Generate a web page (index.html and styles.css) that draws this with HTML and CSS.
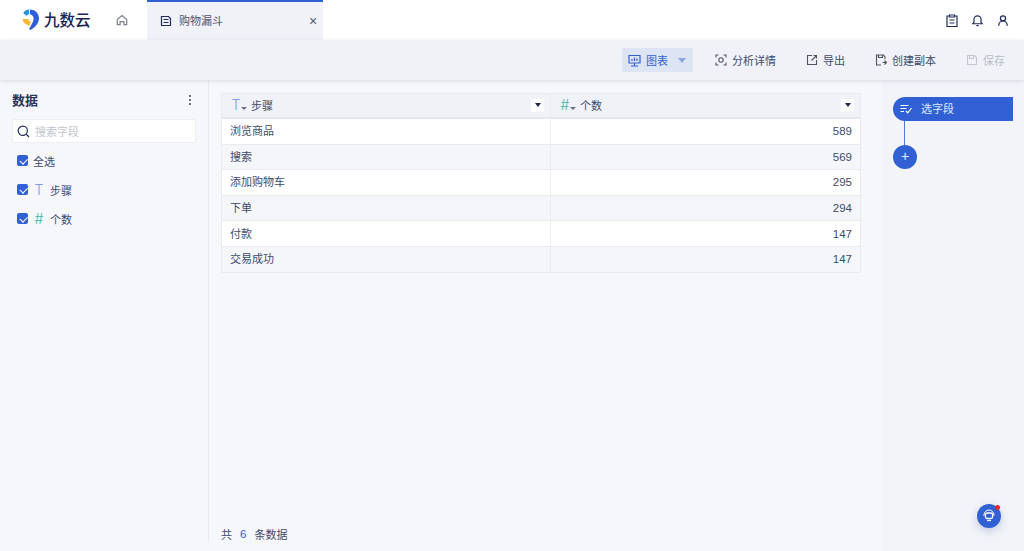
FILE: index.html
```html
<!DOCTYPE html>
<html lang="zh-CN">

<head>
    <meta charset="UTF-8">
    <meta name="viewport" content="width=device-width, initial-scale=1.0">
    <title>九数云</title>
    <link rel="stylesheet" href="styles.css">
</head>

<body>
    <header class="topbar">
        <div class="logo">
            <svg width="18" height="22" viewBox="0 0 18 22">
                <path d="M8 .5c5.500 0 9 4 9 9 0 4.500-4 9-8.500 11.500L7 20c2-3.500 5-8 4.500-11-.3-2-1.700-3.500-3.500-3.700z" fill="#2f5fd8"/>
                <path d="M7 .6v4.700c-1.200.2-2 .7-2.500 1.700L1.200 4C2.500 2 4.500.8 7 .6z" fill="#2f8fe6"/>
                <path d="M.6 10h5.600c.4 1.500 1.500 2.500 2.800 3l-1.500 3.800C3.500 15.500.8 13.500.6 10z" fill="#f6b73c"/>
            </svg>
            <span class="logo-text">九数云</span>
        </div>
        <button class="home-btn">
            <svg width="12" height="12" viewBox="0 0 14 14" fill="none" stroke="#7d828c" stroke-width="1.400">
                <path d="M1.500 6.500 7 1.800l5.500 4.700v6h-3.300V8.800H4.800v3.700H1.500z"/>
            </svg>
        </button>
        <div class="tab">
            <svg width="12" height="12" viewBox="0 0 12 12" fill="none" stroke="#1f2d5a" stroke-width="1.200">
                <path d="M1.500 1.500h7l2 2v7h-9zM3.500 4.500h5M3.500 7.500h5"/>
            </svg>
            <span class="tab-title">购物漏斗</span>
            <span class="tab-close">×</span>
        </div>
        <div class="top-actions">
            <svg width="12" height="13" viewBox="0 0 12 13" fill="none" stroke="#1f2d5a" stroke-width="1.200">
                <path d="M3.500 2H1v10.500h10V2H8.500M3.500 1h5v2h-5zM3.500 6h5M3.500 9h5"/>
            </svg>
            <svg width="13" height="13" viewBox="0 0 14 14" fill="none" stroke="#1f2d5a" stroke-width="1.300">
                <path d="M2 10.500h10L10.800 9V5.800a3.800 3.800 0 0 0-7.600 0V9zM5.800 12.500h2.400"/>
            </svg>
            <svg width="12" height="13" viewBox="0 0 14 14" fill="none" stroke="#1f2d5a" stroke-width="1.500">
                <circle cx="7" cy="4.500" r="3"/>
                <path d="M2 13c0-3 2-5.500 5-5.500s5 2.500 5 5.500"/>
            </svg>
        </div>
    </header>

    <div class="toolbar">
        <button class="tool tool-active">
            <svg width="13" height="13" viewBox="0 0 13 13" fill="none" stroke="#3160d5" stroke-width="1.200">
                <path d="M1 1.500h11v7.500H1zM6.500 9v2.500M3 12h7"/>
                <path d="M4 7V5M6.500 7V3.500M9 7V4.500"/>
            </svg>
            <span>图表</span>
            <i class="caret caret-blue"></i>
        </button>
        <button class="tool">
            <svg width="12" height="12" viewBox="0 0 12 12" fill="none" stroke="#50555f" stroke-width="1.100">
                <path d="M1 3.500V1h2.500M8.500 1H11v2.500M11 8.500V11H8.500M3.500 11H1V8.500"/>
                <circle cx="6" cy="6" r="2.200"/>
            </svg>
            <span>分析详情</span>
        </button>
        <button class="tool">
            <svg width="12" height="12" viewBox="0 0 12 12" fill="none" stroke="#50555f" stroke-width="1.100">
                <path d="M6 1.500H1.500v9h9V6M5.500 6.500 10.500 1.500M7.500 1.500h3v3"/>
            </svg>
            <span>导出</span>
        </button>
        <button class="tool">
            <svg width="12" height="12" viewBox="0 0 12 12" fill="none" stroke="#50555f" stroke-width="1.100">
                <path d="M10 5V3L8.500 1h-7v10H6M3.500 1v2.500h4V1M7.500 8.500h4M9.500 6.500l2 2-2 2"/>
            </svg>
            <span>创建副本</span>
        </button>
        <button class="tool tool-disabled">
            <svg width="12" height="12" viewBox="0 0 12 12" fill="none" stroke="#c3c6cd" stroke-width="1.100">
                <path d="M1.500 1.500h7l2 2v7h-9zM3.500 1.500v3h4v-3"/>
            </svg>
            <span>保存</span>
        </button>
    </div>

    <main class="workspace">
        <aside class="data-panel">
            <div class="panel-head">
                <h3>数据</h3>
                <span class="dots"><i></i><i></i><i></i></span>
            </div>
            <div class="search">
                <svg width="13" height="13" viewBox="0 0 13 13" fill="none" stroke="#1f2d5a" stroke-width="1.200">
                    <circle cx="5.800" cy="5.800" r="4.600"/>
                    <path d="M9.200 9.200 12 12"/>
                </svg>
                <span>搜索字段</span>
            </div>
            <div class="field-row">
                <span class="check"></span>
                <span>全选</span>
            </div>
            <div class="field-row">
                <span class="check"></span>
                <span class="type-icon type-text">T</span>
                <span>步骤</span>
            </div>
            <div class="field-row">
                <span class="check"></span>
                <span class="type-icon type-num">#</span>
                <span>个数</span>
            </div>
        </aside>

        <section class="table-area">
            <div class="table">
                <div class="row head">
                    <div class="cell">
                        <span class="type-icon type-text">T</span><i class="mini-caret"></i>
                        <span>步骤</span>
                        <span class="sort-btn"></span>
                    </div>
                    <div class="cell">
                        <span class="type-icon type-num">#</span><i class="mini-caret"></i>
                        <span>个数</span>
                        <span class="sort-btn"></span>
                    </div>
                </div>
                <div class="row"><div class="cell">浏览商品</div><div class="cell num">589</div></div>
                <div class="row alt"><div class="cell">搜索</div><div class="cell num">569</div></div>
                <div class="row"><div class="cell">添加购物车</div><div class="cell num">295</div></div>
                <div class="row alt"><div class="cell">下单</div><div class="cell num">294</div></div>
                <div class="row"><div class="cell">付款</div><div class="cell num">147</div></div>
                <div class="row alt"><div class="cell">交易成功</div><div class="cell num">147</div></div>
            </div>
            <div class="table-foot">共<b>6</b>条数据</div>
        </section>

        <aside class="step-panel">
            <div class="step-pill">
                <svg width="12" height="10" viewBox="0 0 12 10" fill="none" stroke="#fff" stroke-width="1.200">
                    <path d="M0.500 1.500h8M0.500 4.500h6M0.500 7.500h3.500M6 7l1.800 1.800L11.500 4"/>
                </svg>
                <span>选字段</span>
            </div>
            <div class="step-line"></div>
            <div class="step-add">+</div>
        </aside>
    </main>

    <div class="help-btn">
        <svg width="14" height="14" viewBox="0 0 14 14" fill="none" stroke="#fff" stroke-width="1.300">
            <path d="M2 7V6a5 5 0 0 1 10 0v1" stroke-width="1"/>
            <rect x="3.500" y="4" width="7" height="5.500" rx="1.500"/>
            <path d="M5 11.500h4"/>
        </svg>
        <i class="help-dot"></i>
    </div>
</body>

</html>
```

FILE: styles.css
```css
* {
    box-sizing: border-box;
}

html,
body {
    height: 100%;
}

body {
    margin: 0;
    display: flex;
    flex-direction: column;
    overflow: hidden;
    font-family: "Liberation Sans", "Noto Sans CJK SC", sans-serif;
    font-size: 11px;
    color: #3f4a6b;
    background-color: #f6f7fb;
}

button {
    font: inherit;
    border: none;
    background: none;
    padding: 0;
    display: flex;
    align-items: center;
}

svg {
    display: block;
    flex-shrink: 0;
}

/* top bar */
.topbar {
    height: 40px;
    flex-shrink: 0;
    display: flex;
    align-items: stretch;
    background: white;
}

.logo {
    width: 115px;
    padding-left: 22px;
    display: flex;
    align-items: center;
    gap: 4px;
}

.logo-text {
    padding-top: 1px;
    font-size: 15.500px;
    font-weight: 500;
    color: #1a2550;
    line-height: 1;
}

.home-btn {
    width: 32px;
    padding-left: 1px;
    justify-content: flex-start;
}

.tab {
    width: 176px;
    padding-left: 13px;
    display: flex;
    align-items: center;
    gap: 7px;
    background: #f0f2f7;
    border-top: 2.500px solid #3160d5;
}

.tab-title {
    flex: 1;
    padding-bottom: 2px;
    color: #4b5573;
}

.tab-close {
    width: 14px;
    font-size: 14px;
    color: #555c6e;
}

.top-actions {
    margin-left: auto;
    padding-right: 15px;
    display: flex;
    align-items: center;
    gap: 13px;
}

/* toolbar */
.toolbar {
    height: 40px;
    flex-shrink: 0;
    position: relative;
    display: flex;
    align-items: center;
    justify-content: flex-end;
    padding-right: 19px;
    gap: 30px;
    background: #f0f2f7;
    box-shadow: 0 1px 4px rgba(30, 40, 80, 0.14);
}

.tool {
    gap: 5px;
    height: 24px;
    color: #3f4a6b;
}

.tool-active {
    width: 71px;
    margin-right: -8px;
    padding-left: 6px;
    background: #dde4f3;
    border-radius: 2px;
    color: #3160d5;
}

.tool-disabled {
    color: #b8bcc6;
}

.caret {
    width: 0;
    height: 0;
    margin-left: 5px;
    border-left: 4px solid transparent;
    border-right: 4px solid transparent;
    border-top: 5px solid #8ea6e2;
}

/* main */
.workspace {
    flex: 1;
    min-height: 0;
    display: flex;
}

.data-panel {
    width: 209px;
    padding: 11px 12px 0;
    border-right: 1px solid #e6e8ef;
    margin-bottom: 10px;
}

.panel-head {
    height: 17px;
    display: flex;
    align-items: center;
    justify-content: space-between;
}

.panel-head h3 {
    margin: 0;
    font-size: 13px;
    font-weight: 700;
    color: #2a3558;
}

.dots {
    display: flex;
    flex-direction: column;
    gap: 2px;
    margin-right: 5px;
}

.dots i {
    width: 2px;
    height: 2px;
    background: #6a7187;
}

.search {
    height: 24px;
    margin-top: 11px;
    padding-left: 4px;
    display: flex;
    align-items: center;
    gap: 5px;
    background: white;
    border: 1px solid #eceef3;
    color: #c3c6cd;
}

.field-row {
    height: 29px;
    padding-left: 5px;
    display: flex;
    align-items: center;
    gap: 5px;
}

.search + .field-row {
    margin-top: 3px;
}

.check {
    width: 11px;
    height: 11px;
    border-radius: 2px;
    background: #3160d5;
    position: relative;
}

.check::after {
    content: "";
    position: absolute;
    left: 2.500px;
    top: 2.500px;
    width: 6px;
    height: 3.500px;
    border-left: 1.500px solid white;
    border-bottom: 1.500px solid white;
    transform: rotate(-45deg);
}

.type-icon {
    display: inline-block;
    width: 12px;
    font-family: Inter, "Liberation Sans", sans-serif;
    font-size: 14px;
    font-weight: 300;
    line-height: 1;
    text-align: center;
}

.type-text {
    color: #7d9be0;
}

.type-num {
    color: #3db8a5;
}

/* table */
.table-area {
    flex: 1;
    min-width: 0;
    padding: 13px 20px 9px 12px;
    display: flex;
    flex-direction: column;
}

.table {
    border: 1px solid #e9ebf1;
    border-width: 1px 1px 0;
}

.row {
    height: 25.600px;
    display: grid;
    grid-template-columns: 329px 1fr;
    background: white;
    border-bottom: 1px solid #e9ebf1;
}

.row.alt {
    background: #f5f6fa;
}

.row.head {
    height: 25px;
    background: #f0f2f7;
    border-bottom: 2px solid #e4e7ee;
}

.cell {
    padding: 0 8px 2px;
    display: flex;
    align-items: center;
    border-right: 1px solid #e9ebf1;
}

.cell:last-child {
    border-right: none;
}

.cell.num {
    padding-bottom: 0;
    justify-content: flex-end;
    font-size: 11.500px;
}

.head .cell {
    padding: 0 5px 1px 9px;
}

.head .type-icon {
    width: 10px;
}

.mini-caret {
    width: 0;
    height: 0;
    margin: 6px 4px 0 0;
    border-left: 3px solid transparent;
    border-right: 3px solid transparent;
    border-top: 3px solid #6a7187;
}

.sort-btn {
    width: 13px;
    height: 13px;
    margin-left: auto;
    margin-right: 1px;
    background: white;
    display: flex;
    align-items: center;
    justify-content: center;
}

.sort-btn::after {
    content: "";
    border-left: 3.500px solid transparent;
    border-right: 3.500px solid transparent;
    border-top: 4px solid #1a2550;
}

.table-foot {
    margin-top: auto;
    display: flex;
    align-items: center;
    height: 16px;
}

.table-foot b {
    margin: 0 8px;
    font-weight: 400;
    font-size: 11.500px;
    color: #3160d5;
}

/* steps on the right */
.step-panel {
    width: 143px;
    flex-shrink: 0;
    padding: 17px 11px 0 12px;
    background: #f2f4f9;
}

.step-pill {
    height: 24px;
    padding-left: 7px;
    display: flex;
    align-items: center;
    gap: 9px;
    background: #3160d5;
    border-radius: 12px 0 0 12px;
    color: #dfe6f8;
}

.step-pill span {
    padding-bottom: 2px;
}

.step-line {
    width: 1px;
    height: 24px;
    margin-left: 11px;
    background: #4f7ae6;
}

.step-add {
    width: 24px;
    height: 24px;
    border-radius: 50%;
    background: #3160d5;
    color: #e8edfa;
    font-size: 14px;
    line-height: 23px;
    text-align: center;
}

/* floating help button */
.help-btn {
    position: absolute;
    left: 977px;
    top: 504px;
    width: 24px;
    height: 24px;
    border-radius: 50%;
    background: #3160d5;
    box-shadow: 0 3px 8px rgba(40, 70, 150, 0.25);
    display: flex;
    align-items: center;
    justify-content: center;
}

.help-dot {
    position: absolute;
    right: 1px;
    top: 1px;
    width: 5px;
    height: 5px;
    border-radius: 50%;
    background: #f0262c;
}
```
